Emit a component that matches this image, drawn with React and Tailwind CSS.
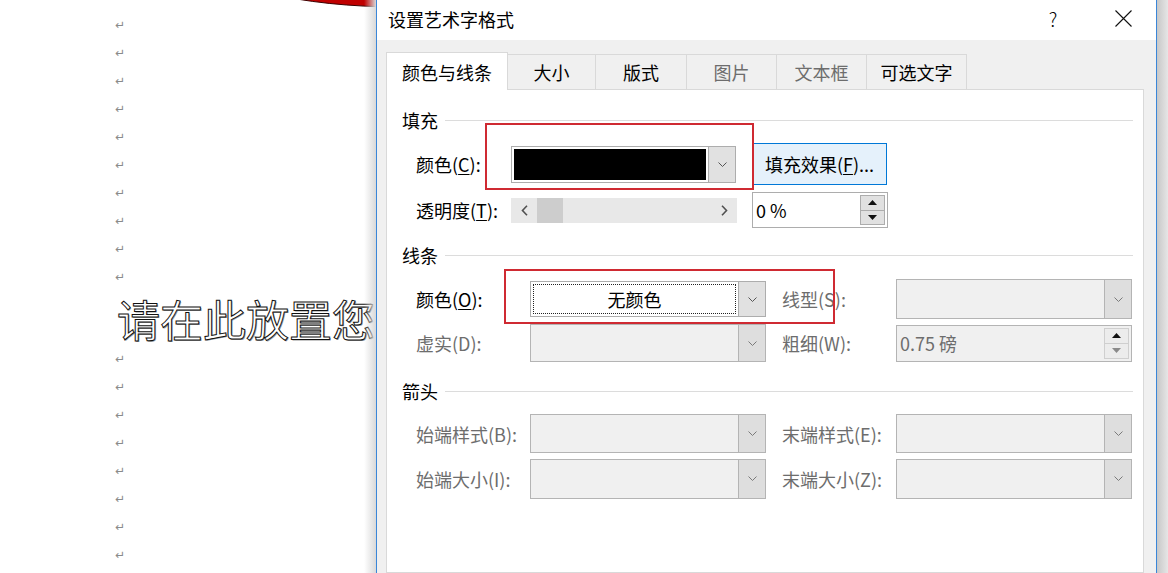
import clsx from "clsx";

const FONT = "font-['Noto_Sans_CJK_SC','Noto_Sans',sans-serif]";

function Chevron({ dim }) {
  return (
    <svg width="9" height="5" viewBox="0 0 9 5">
      <path d="M0.5 0.5 L4.5 4.5 L8.5 0.5" fill="none" stroke={dim ? "#7a7a7a" : "#555"} strokeWidth="1" />
    </svg>
  );
}

function Arrow({ dir }) {
  return (
    <svg width="7" height="11" viewBox="0 0 7 11">
      <path
        d={dir === "left" ? "M6 0.8 L1.5 5.5 L6 10.2" : "M1 0.8 L5.5 5.5 L1 10.2"}
        fill="none"
        stroke="#505050"
        strokeWidth="1.6"
      />
    </svg>
  );
}

function Tri({ up, dim }) {
  return (
    <svg width="9" height="5" viewBox="0 0 9 5">
      <path d={up ? "M0 5 L4.5 0 L9 5 Z" : "M0 0 L4.5 5 L9 0 Z"} fill={dim ? "#8a8a8a" : "#111"} />
    </svg>
  );
}

function DropBtn({ dim }) {
  return (
    <div
      className={clsx(
        "flex w-[27px] shrink-0 items-center justify-center border-l",
        dim ? "border-[#b4b4b4] bg-[#dedede]" : "border-[#adadad] bg-[#e1e1e1]"
      )}
    >
      <Chevron dim={dim} />
    </div>
  );
}

function DisabledCombo({ className }) {
  return (
    <div className={clsx("flex shrink-0 border border-[#b4b4b4] bg-[#f0f0f0]", className)}>
      <div className="flex-1" />
      <DropBtn dim />
    </div>
  );
}

function SpinButtons({ dim }) {
  return (
    <div className="flex w-[27px] shrink-0 flex-col py-[2px] pr-[2px]">
      <div
        className={clsx(
          "flex flex-1 items-center justify-center border",
          dim ? "border-[#cfcfcf] bg-[#ececec]" : "border-[#adadad] bg-[#e1e1e1]"
        )}
      >
        <Tri up />
      </div>
      <div
        className={clsx(
          "-mt-px flex flex-1 items-center justify-center border",
          dim ? "border-[#cfcfcf] bg-[#ececec]" : "border-[#adadad] bg-[#e1e1e1]"
        )}
      >
        <Tri dim={dim} />
      </div>
    </div>
  );
}

function Section({ title, className }) {
  return (
    <div className={clsx("flex h-[24px] items-center pl-[15px] pr-[10px]", className)}>
      <span className="text-[18px] leading-none text-black">{title}</span>
      <div className="ml-[7px] h-px flex-1 bg-[#dcdcdc]" />
    </div>
  );
}

function Label({ children, dim, className }) {
  return (
    <span
      className={clsx(
        "shrink-0 text-[18px] leading-none",
        dim ? "text-[#6d6d6d]" : "text-black",
        className
      )}
    >
      {children}
    </span>
  );
}

function Doc() {
  const top = Array.from({ length: 10 });
  const bottom = Array.from({ length: 8 });
  const mark = (i) => (
    <div key={i} className="flex h-[28px] items-center pl-[115px]">
      <span className="font-['DejaVu_Sans',sans-serif] text-[12px] leading-none text-[#8a8a8a]">↵</span>
    </div>
  );
  return (
    <div className="relative h-full w-[376px] shrink-0 overflow-hidden bg-white">
      <svg className="absolute left-0 top-0" width="376" height="12" viewBox="0 0 376 12">
        <ellipse cx="400" cy="-40" rx="185" ry="47" fill="#c00000" stroke="#3a0000" strokeWidth="1" />
      </svg>
      <div className="pt-[11px]">
        {top.map((_, i) => mark(i))}
        <div className="flex h-[54px] items-center whitespace-nowrap pl-[117px]">
          <span className="text-[43px] leading-none text-white [-webkit-text-stroke:1px_#111] [text-shadow:1px_1px_0_#9a9a9a]">
            请在此放置您
          </span>
        </div>
        {bottom.map((_, i) => mark(i + 20))}
      </div>
      <div className="absolute right-0 top-0 h-full w-[12px] bg-linear-to-r from-white/0 to-[#d9d9d9]" />
    </div>
  );
}

function Tabs() {
  const tabs = [
    { t: "大小", w: "w-[88px]" },
    { t: "版式", w: "w-[91px]" },
    { t: "图片", w: "w-[90px]", dim: true },
    { t: "文本框", w: "w-[90px]", dim: true },
    { t: "可选文字", w: "w-[100px]" },
  ];
  return (
    <div className="flex items-end">
      <div className="relative z-10 -mb-px flex h-[38px] w-[122px] items-center justify-center border-x border-t border-[#d9d9d9] bg-white text-[18px] leading-none">
        颜色与线条
      </div>
      {tabs.map((tab) => (
        <div
          key={tab.t}
          className={clsx(
            "flex h-[35px] items-center justify-center border-r border-t border-[#d9d9d9] bg-[#f0f0f0] text-[18px] leading-none",
            tab.w,
            tab.dim ? "text-[#6d6d6d]" : "text-black"
          )}
        >
          {tab.t}
        </div>
      ))}
    </div>
  );
}

function Panel() {
  return (
    <div className="relative flex-1 border border-[#d9d9d9] bg-white">
      <Section title="填充" className="mt-[18px]" />

      <div className="mt-[9px] flex h-[46px] items-center pl-[29px]">
        <Label className="w-[95px]">
          颜色(<span className="underline underline-offset-2">C</span>):
        </Label>
        <div className="flex h-[37px] w-[225px] shrink-0 border border-[#adadad] bg-white">
          <div className="m-[2px] flex-1 bg-black" />
          <DropBtn />
        </div>
        <div className="ml-[16px] flex h-[42px] w-[135px] shrink-0 items-center justify-center border border-[#0078d7] bg-[#e5f1fb] text-[18px] leading-none">
          填充效果(<span className="underline underline-offset-2">F</span>)...
        </div>
      </div>

      <div className="flex h-[46px] items-center pl-[29px]">
        <Label className="w-[95px]">
          透明度(<span className="underline underline-offset-2">T</span>):
        </Label>
        <div className="flex h-[25px] w-[226px] shrink-0 bg-[#e8e8e8]">
          <div className="flex w-[26px] items-center justify-center">
            <Arrow dir="left" />
          </div>
          <div className="w-[26px] bg-[#cdcdcd]" />
          <div className="flex-1" />
          <div className="flex w-[26px] items-center justify-center">
            <Arrow dir="right" />
          </div>
        </div>
        <div className="ml-[15px] flex h-[36px] w-[136px] shrink-0 border border-[#adadad] bg-white">
          <div className="flex flex-1 items-center pl-[3px] text-[18px] leading-none">0 %</div>
          <SpinButtons />
        </div>
      </div>

      <Section title="线条" className="mt-[10px]" />

      <div className="mt-[10px] flex h-[44px] items-center pl-[29px]">
        <Label className="w-[114px]">
          颜色(<span className="underline underline-offset-2">O</span>):
        </Label>
        <div className="flex h-[36px] w-[236px] shrink-0 border border-[#adadad] bg-white">
          <div className="m-[2px] flex flex-1 items-center justify-center border border-dotted border-[#222] text-[18px] leading-none">
            无颜色
          </div>
          <DropBtn />
        </div>
        <Label dim className="ml-[16px] w-[114px]">
          线型(S):
        </Label>
        <DisabledCombo className="h-[40px] w-[236px]" />
      </div>

      <div className="flex h-[44px] items-center pl-[29px]">
        <Label dim className="w-[114px]">
          虚实(D):
        </Label>
        <DisabledCombo className="h-[38px] w-[236px]" />
        <Label dim className="ml-[16px] w-[114px]">
          粗细(W):
        </Label>
        <div className="flex h-[37px] w-[236px] shrink-0 border border-[#b4b4b4] bg-[#f0f0f0]">
          <div className="flex flex-1 items-center pl-[3px] text-[18px] leading-none text-[#6d6d6d]">0.75 磅</div>
          <SpinButtons dim />
        </div>
      </div>

      <Section title="箭头" className="mt-[14px]" />

      <div className="mt-[8px] flex h-[45px] items-center pl-[29px]">
        <Label dim className="w-[114px]">
          始端样式(B):
        </Label>
        <DisabledCombo className="h-[39px] w-[236px]" />
        <Label dim className="ml-[16px] w-[114px]">
          末端样式(E):
        </Label>
        <DisabledCombo className="h-[39px] w-[236px]" />
      </div>

      <div className="flex h-[45px] items-center pl-[29px]">
        <Label dim className="w-[114px]">
          始端大小(I):
        </Label>
        <DisabledCombo className="h-[40px] w-[236px]" />
        <Label dim className="ml-[16px] w-[114px]">
          末端大小(Z):
        </Label>
        <DisabledCombo className="h-[40px] w-[236px]" />
      </div>

      {/* red annotation boxes */}
      <div className="absolute left-[98px] top-[33px] h-[67px] w-[269px] border-2 border-[#cf2a32]" />
      <div className="absolute left-[117px] top-[179px] h-[55px] w-[331px] border-2 border-[#cf2a32]" />
    </div>
  );
}

export default function App() {
  return (
    <div className={clsx("flex h-[573px] w-[1168px] overflow-hidden bg-white text-black", FONT)}>
      <Doc />
      <div className="flex w-[781px] shrink-0 flex-col border-x border-[#3a86d8]">
        <div className="flex h-[40px] shrink-0 items-center bg-white pb-[3px] pl-[11px]">
          <span className="text-[18px] leading-none">设置艺术字格式</span>
          <div className="ml-auto flex items-center pr-[10px]">
            <div className="flex w-[46px] justify-center text-[19px] font-light leading-none">?</div>
            <div className="ml-[24px] flex w-[46px] justify-center">
              <svg width="17" height="17" viewBox="0 0 17 17">
                <path d="M0.5 0.5 L16.5 16.5 M16.5 0.5 L0.5 16.5" stroke="#111" strokeWidth="1.1" />
              </svg>
            </div>
          </div>
        </div>
        <div className="flex flex-1 flex-col bg-[#f0f0f0] pl-[9px] pr-[12px] pt-[12px]">
          <Tabs />
          <Panel />
        </div>
      </div>
      <div className="flex-1 bg-linear-to-r from-[#c8c8c8] to-[#e6e6e6]" />
    </div>
  );
}
